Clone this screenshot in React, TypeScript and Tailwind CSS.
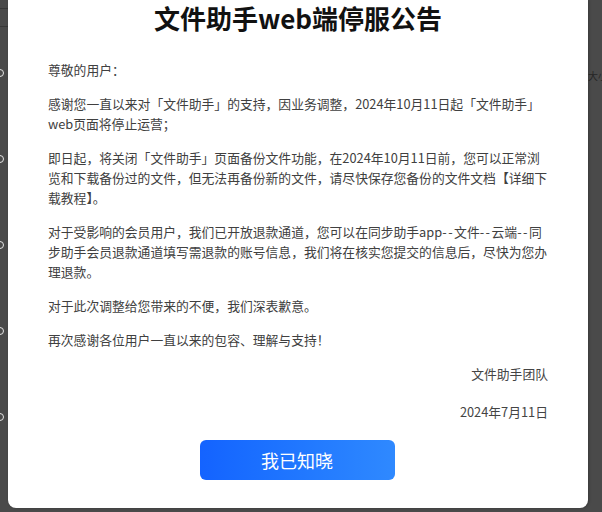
import React from 'react';

const SideRing: React.FC = () => (
  <div className="w-[8px] h-[8px] -ml-[4px] rounded-full border-[1.5px] border-[#e5e5e5]" />
);

const App: React.FC = () => {
  return (
    <div
      className="relative w-[602px] h-[512px] overflow-hidden bg-[#4a4a4a]"
      style={{ fontFamily: '"Noto Sans CJK SC", "Noto Sans", sans-serif' }}
    >
      {/* dimmed page behind the dialog */}
      <div className="flex justify-between h-full">
        <div className="w-[8px] flex flex-col">
          <div className="h-[9px] border-b border-[#383838]" />
          <div className="h-[18px] border-b border-[#383838]" />
          <div className="flex flex-col gap-[78px] pt-[42px]">
            <SideRing />
            <SideRing />
            <SideRing />
            <SideRing />
            <SideRing />
          </div>
        </div>
        <div className="pt-[68px] -mr-[6px] text-[10px] leading-4 text-[#262626] whitespace-nowrap">大小</div>
      </div>

      {/* notice dialog */}
      <div className="absolute left-[8px] top-0 w-[580px] h-[508px] bg-white rounded-b-[8px] shadow-[1px_0_3px_rgba(0,0,0,0.25)] flex flex-col">
        <h1 className="pt-[1px] text-center text-[26px] leading-[34px] font-bold text-[#111]">
          文件助手web端停服公告
        </h1>

        <div className="mt-[25px] mx-10 w-[500px] flex flex-col gap-[14px] text-[12.8px] leading-5 text-[#404040]">
          <p>尊敬的用户：</p>
          <p>感谢您一直以来对「文件助手」的支持，因业务调整，2024年10月11日起「文件助手」web页面将停止运营；</p>
          <p>
            即日起，将关闭「文件助手」页面备份文件功能，在2024年10月11日前，您可以正常浏览和下载备份过的文件，但无法再备份新的文件，请尽快保存您备份的文件文档【详细下载教程】。
          </p>
          <p>
            对于受影响的会员用户，我们已开放退款通道，您可以在同步助手app<span className="tracking-[1.5px]">--</span>文件<span className="tracking-[1.5px]">--</span>云端<span className="tracking-[1.5px]">--</span>同步助手会员退款通道填写需退款的账号信息，我们将在核实您提交的信息后，尽快为您办理退款。
          </p>
          <p>对于此次调整给您带来的不便，我们深表歉意。</p>
          <p>再次感谢各位用户一直以来的包容、理解与支持！</p>
          <p className="text-right text-[#444]">文件助手团队</p>
          <p className="text-right text-[#444] mt-[4px]">2024年7月11日</p>
        </div>

        <div className="mt-[18px] flex justify-center">
          <button className="w-[195px] h-[40px] -ml-[2px] rounded-[6px] bg-linear-to-r from-[#1463ff] to-[#2f89ff] text-white text-[18px]">
            我已知晓
          </button>
        </div>
      </div>
    </div>
  );
};

export default App;
